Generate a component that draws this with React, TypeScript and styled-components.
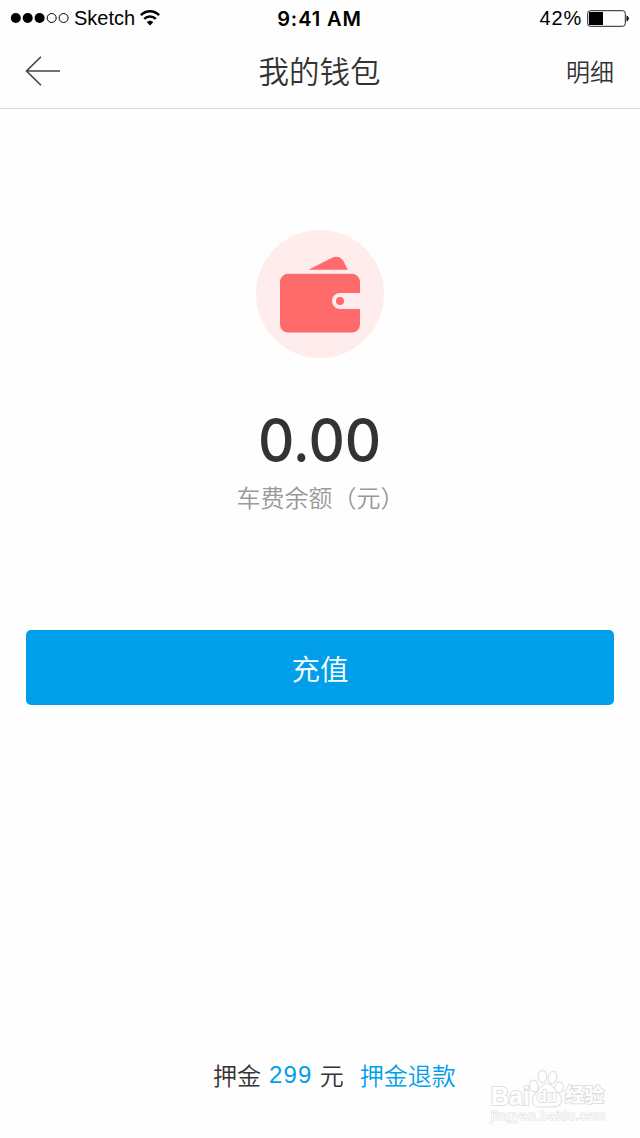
import React from 'react';
import styled, { createGlobalStyle } from 'styled-components';

const GlobalStyle = createGlobalStyle`
  * { box-sizing: border-box; }
  body {
    margin: 0;
    background: #fefefe;
    font-family: "Liberation Sans", "Noto Sans CJK SC", sans-serif;
    color: #333;
  }
`;

const Screen = styled.main`
  position: relative;
  display: flex;
  flex-direction: column;
  width: 640px;
  height: 1138px;
  overflow: hidden;
  background: #fefefe;
`;

const StatusBar = styled.div`
  display: grid;
  grid-template-columns: 1fr auto 1fr;
  align-items: center;
  height: 36px;
  padding: 0 11px 0 10px;
  color: #000;
  font-size: 20px;
  line-height: 36px;
`;

const StatusGroup = styled.div<{ $end?: boolean }>`
  display: flex;
  align-items: center;
  justify-content: ${(p) => (p.$end ? 'flex-end' : 'flex-start')};
  gap: 5px;
`;

const StatusLabel = styled.span<{ $spacing?: number }>`
  letter-spacing: ${(p) => p.$spacing ?? 0}px;
`;

const Clock = styled.span`
  padding-top: 2px;
  font-family: Inter, sans-serif;
  font-weight: 600;
  font-size: 20px;
  letter-spacing: 0.9px;
  line-height: 34px;
`;

const NavBar = styled.header`
  display: grid;
  grid-template-columns: 1fr auto 1fr;
  align-items: center;
  height: 73px;
  padding: 0 26px 2px 25px;
  border-bottom: 1px solid #d8d8d8;
`;

const IconButton = styled.button`
  display: flex;
  width: 36px;
  padding: 0;
  border: 0;
  background: none;
`;

const Title = styled.h1`
  margin: 0 0 2px;
  font-family: "Noto Sans CJK SC", sans-serif;
  font-size: 30.5px;
  font-weight: 350;
  line-height: 40px;
`;

const NavLink = styled.a`
  justify-self: end;
  font-family: "Noto Sans CJK SC", sans-serif;
  font-size: 24px;
  font-weight: 350;
  line-height: 40px;
`;

const Balance = styled.section`
  display: flex;
  flex-direction: column;
  align-items: center;
  padding-top: 121px;
`;

const Amount = styled.div`
  margin-top: 47px;
  font-family: Inter, sans-serif;
  font-size: 60px;
  font-weight: 500;
  line-height: 70px;
  transform: scaleX(0.94);
`;

const Caption = styled.div`
  margin-top: 7px;
  padding-left: 1px;
  font-family: "Noto Sans CJK SC", sans-serif;
  font-size: 24px;
  font-weight: 350;
  line-height: 30px;
  color: #999;
`;

const PrimaryButton = styled.button`
  height: 75px;
  margin: 118px 26px 0;
  padding: 0 0 1px;
  border: 0;
  border-radius: 5px;
  background: #019fe9;
  color: #fff;
  font-family: "Noto Sans CJK SC", sans-serif;
  font-size: 28.5px;
  font-weight: 350;
`;

const Deposit = styled.footer`
  display: flex;
  align-items: center;
  margin-top: auto;
  padding: 0 0 43px 213px;
  font-family: "Noto Sans CJK SC", sans-serif;
  font-size: 24px;
  font-weight: 350;
  line-height: 40px;
`;

const DepositValue = styled.span`
  margin: 0 7px 0 8px;
  font-family: "Liberation Sans", sans-serif;
  font-size: 24px;
  letter-spacing: 1.2px;
  color: #019fe9;
`;

const RefundLink = styled.a`
  margin-left: 16px;
  color: #019fe9;
`;

const Watermark = styled.div`
  position: absolute;
  left: 490px;
  top: 1067px;
  width: 120px;
  height: 60px;
  font-family: "Liberation Sans", "Noto Sans CJK SC", sans-serif;
  color: #fefefe;
`;

const Paw = styled.svg`
  position: absolute;
  left: 38px;
  top: 1px;
`;

const Mark = styled.span<{ $x: number; $y: number; $size: number; $weight?: number; $spacing?: number; $stroke?: number }>`
  position: absolute;
  left: ${(p) => p.$x}px;
  top: ${(p) => p.$y}px;
  font-size: ${(p) => p.$size}px;
  font-weight: ${(p) => p.$weight ?? 700};
  line-height: ${(p) => p.$size}px;
  letter-spacing: ${(p) => p.$spacing ?? 0}px;
  white-space: nowrap;
  paint-order: stroke fill;
  -webkit-text-stroke: ${(p) => p.$stroke ?? 2}px #e0e0e0;
`;

const SignalDots = () => (
  <svg width="59" height="12" viewBox="0 0 59 12">
    {[5.8, 17.7, 29.6].map((x) => (
      <circle key={x} cx={x} cy="6" r="5" />
    ))}
    {[41.7, 53.6].map((x) => (
      <circle key={x} cx={x} cy="6" r="4.5" fill="none" stroke="#000" strokeWidth="1" />
    ))}
  </svg>
);

const Wifi = () => (
  <svg width="20" height="16" viewBox="0 0 20 16" fill="none" stroke="#000" strokeWidth="2.4">
    <path d="M0.9 5.2C6 0 14 0 19.1 5.2" />
    <path d="M4.2 8.9C7.4 5.6 12.6 5.6 15.8 8.9" />
    <path d="M6.8 12.2C8.6 10.2 11.4 10.2 13.2 12.2L10 15.6Z" fill="#000" stroke="none" />
  </svg>
);

const Battery = () => (
  <svg width="42" height="17" viewBox="0 0 42 17">
    <rect x="0.7" y="0.7" width="37.6" height="15.6" rx="2.6" fill="none" stroke="#222" strokeWidth="1" />
    <rect x="2" y="2" width="14" height="13" />
    <path d="M39.5 5.5C42.5 6.3 42.5 10.7 39.5 11.5Z" />
  </svg>
);

const BackArrow = () => (
  <svg width="36" height="30" viewBox="0 0 36 30" fill="none" stroke="#444" strokeWidth="1.6">
    <path d="M16 0.8L1.5 15L16 29.2M1.5 15H35" />
  </svg>
);

const WalletIcon = () => (
  <svg width="128" height="128" viewBox="0 0 128 128">
    <circle cx="64" cy="64" r="64" fill="#ffecec" />
    <g fill="#ff6b6b">
      <path d="M52.5 39.8L75.5 28C80.5 25.6 85.3 26.9 87.7 31.5L91.8 39.8Z" />
      <path d="M32 43.8H96a8 8 0 0 1 8 8V63H84a8 8 0 0 0 0 16h20V94.5a8 8 0 0 1-8 8H32a8 8 0 0 1-8-8V51.8a8 8 0 0 1 8-8Z" />
      <circle cx="84" cy="71" r="4" />
    </g>
  </svg>
);

export default function App() {
  return (
    <>
      <GlobalStyle />
      <Screen>
        <StatusBar>
          <StatusGroup>
            <SignalDots />
            <StatusLabel>Sketch</StatusLabel>
            <Wifi />
          </StatusGroup>
          <Clock>9:41 AM</Clock>
          <StatusGroup $end>
            <StatusLabel $spacing={0.8}>42%</StatusLabel>
            <Battery />
          </StatusGroup>
        </StatusBar>
        <NavBar>
          <IconButton aria-label="返回">
            <BackArrow />
          </IconButton>
          <Title>我的钱包</Title>
          <NavLink>明细</NavLink>
        </NavBar>
        <Balance>
          <WalletIcon />
          <Amount>0.00</Amount>
          <Caption>车费余额（元）</Caption>
        </Balance>
        <PrimaryButton>充值</PrimaryButton>
        <Deposit>
          <span>押金</span>
          <DepositValue>299</DepositValue>
          <span>元</span>
          <RefundLink>押金退款</RefundLink>
        </Deposit>
        <Watermark>
          <Mark $x={1} $y={17} $size={25}>Bai</Mark>
          <Mark $x={75} $y={19} $size={19.5}>经验</Mark>
          <Mark $x={1} $y={42} $size={13} $weight={400} $spacing={0.6} $stroke={1.2}>jingyan.baidu.com</Mark>
          <Paw width="46" height="42" viewBox="0 0 46 42" fill="#fefefe" stroke="#e2e2e2" strokeWidth="1.2">
            <ellipse cx="6" cy="18" rx="4.3" ry="6" transform="rotate(-10 6 18)" />
            <ellipse cx="14.5" cy="8.5" rx="4.3" ry="6.2" />
            <ellipse cx="24.5" cy="9.5" rx="4.3" ry="6.2" transform="rotate(12 24.5 9.5)" />
            <ellipse cx="31" cy="19.5" rx="4.3" ry="5.6" transform="rotate(15 31 19.5)" />
            <path d="M19 15.5C24 15.5 26 21 29.5 24C33.5 27.5 35 33 32 36.5C28.5 40.5 23 38.8 18.5 38.8C14 38.8 8.5 40.5 5.5 36.5C3 33 4.5 28 8.5 24.5C12 21 13.5 15.5 19 15.5Z" />
          </Paw>
          <Mark $x={47} $y={22} $size={16} $stroke={1.8}>du</Mark>
        </Watermark>
      </Screen>
    </>
  );
}
